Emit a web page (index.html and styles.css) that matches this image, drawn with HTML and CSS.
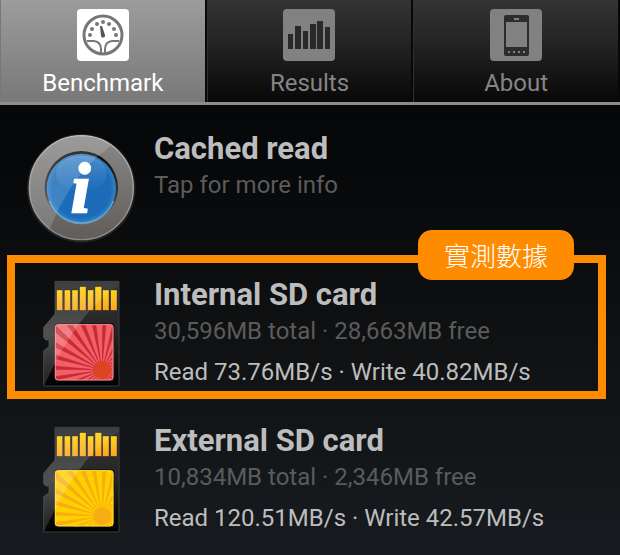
FILE: index.html
```
<!DOCTYPE html>
<html lang="en">
<head>
  <meta charset="UTF-8">
  <meta name="viewport" content="width=device-width, initial-scale=1.0">
  <title>SD card benchmark</title>
  <link rel="stylesheet" href="styles.css">
</head>
<body>
  <!-- shared shapes for the SD card icons -->
  <svg class="defs" aria-hidden="true">
    <defs>
      <linearGradient id="cardBody" x1="0" y1="0" x2="0" y2="1">
        <stop offset="0" stop-color="#363636"/>
        <stop offset="0.5" stop-color="#242424"/>
        <stop offset="1" stop-color="#000"/>
      </linearGradient>
      <linearGradient id="pins" x1="0" y1="0" x2="0" y2="1">
        <stop offset="0" stop-color="#ffd41c"/>
        <stop offset="1" stop-color="#fba524"/>
      </linearGradient>
      <linearGradient id="gloss" x1="0" y1="0" x2="0" y2="1">
        <stop offset="0" stop-color="#fff" stop-opacity="0.04"/>
        <stop offset="0.5" stop-color="#fff" stop-opacity="0.2"/>
        <stop offset="1" stop-color="#fff" stop-opacity="0.12"/>
      </linearGradient>
      <clipPath id="labelClip">
        <rect x="165" y="223" width="175" height="168" rx="9"/>
      </clipPath>
      <symbol id="sdcard" viewBox="120 84 246 333">
        <path d="M165 94H357V408H131V302L147 290V270H137L131 262V232L165 192Z" fill="url(#cardBody)" stroke="#3c3c3c" stroke-width="3"/>
        <g fill="url(#pins)" stroke="#171717" stroke-width="1">
          <rect x="170" y="120" width="18" height="61"/>
          <rect x="193" y="120" width="18" height="61"/>
          <rect x="216" y="120" width="18" height="61"/>
          <rect x="239" y="110" width="19" height="71"/>
          <rect x="263" y="120" width="18" height="61"/>
          <rect x="285" y="110" width="20" height="71"/>
          <rect x="308" y="120" width="19" height="61"/>
          <rect x="332" y="120" width="19" height="61"/>
        </g>
        <rect x="162" y="220" width="181" height="174" rx="11" fill="#151515"/>
        <g clip-path="url(#labelClip)">
          <rect class="label-bg" x="165" y="223" width="175" height="168"/>
          <circle class="label-rays" cx="306" cy="360" r="120" pathLength="56"/>
          <circle class="label-sun" cx="306" cy="360" r="27"/>
        </g>
        <rect class="label-edge" x="166" y="224" width="173" height="166" rx="9"/>
        <path d="M165 94H357V106Q235 180 133 406H131V302L147 290V270H137L131 262V232L165 192Z" fill="url(#gloss)"/>
      </symbol>
    </defs>
  </svg>

  <nav class="tabs">
    <button class="tab active" type="button">
      <svg class="tab-icon" viewBox="0 0 52 52" aria-hidden="true">
        <rect width="52" height="52" rx="4" fill="#fff"/>
        <g fill="none" stroke="#777">
          <circle cx="26" cy="26" r="19" stroke-width="3"/>
          <path d="M10 32H17Q24 33 24 40V44M42 32H35Q28 33 28 40V44" stroke-width="2"/>
        </g>
        <path d="M23 17L25 17L28 26A2 2 0 0 1 24 27Z" fill="#555"/>
        <g fill="#777">
          <circle cx="13" cy="26" r="2"/>
          <circle cx="15" cy="20" r="2"/>
          <circle cx="20" cy="15" r="2"/>
          <circle cx="26" cy="13" r="2"/>
          <circle cx="32" cy="15" r="2"/>
          <circle cx="37" cy="20" r="2"/>
          <circle cx="39" cy="26" r="2"/>
        </g>
      </svg>
      <span>Benchmark</span>
    </button>
    <button class="tab" type="button">
      <svg class="tab-icon" viewBox="0 0 52 52" aria-hidden="true">
        <rect width="52" height="52" rx="4" fill="#818181"/>
        <path d="M5 25h5v15h-5zM12 17h6v23h-6zM20 22h5v18h-5zM27 15h6v25h-6zM34 12h6v28h-6zM42 18h5v22h-5z" fill="#292929"/>
      </svg>
      <span>Results</span>
    </button>
    <button class="tab" type="button">
      <svg class="tab-icon" viewBox="0 0 52 52" aria-hidden="true">
        <rect width="52" height="52" rx="4" fill="#818181"/>
        <rect x="14" y="6" width="25" height="41" rx="2" fill="#2c2c2c"/>
        <rect x="16" y="13" width="21" height="25" fill="#818181"/>
        <path d="M24 10h5M18 43h2M23 43h2M28 43h2M33 43h2" stroke="#818181" stroke-width="2"/>
      </svg>
      <span>About</span>
    </button>
  </nav>

  <main class="list">
    <section class="item">
      <svg class="icon-info" viewBox="15 15 339 345" aria-hidden="true">
        <defs>
          <linearGradient id="ring" x1="0" y1="0" x2="0" y2="1">
            <stop offset="0" stop-color="#8a8886"/>
            <stop offset="1" stop-color="#605d5b"/>
          </linearGradient>
          <linearGradient id="rim" x1="0" y1="0" x2="0" y2="1">
            <stop offset="0" stop-color="#c0c0c0"/>
            <stop offset="1" stop-color="#8a8a8a"/>
          </linearGradient>
          <linearGradient id="well" x1="0" y1="0" x2="0" y2="1">
            <stop offset="0" stop-color="#0b0b0b"/>
            <stop offset="0.6" stop-color="#333"/>
            <stop offset="1" stop-color="#93918f"/>
          </linearGradient>
          <radialGradient id="blue" cx="0.5" cy="0.5" r="0.5">
            <stop offset="0" stop-color="#1b6bb9"/>
            <stop offset="0.85" stop-color="#1c6cba"/>
            <stop offset="1" stop-color="#3582c4"/>
          </radialGradient>
          <linearGradient id="shine" x1="0" y1="0" x2="0" y2="1">
            <stop offset="0" stop-color="#fff" stop-opacity="0.2"/>
            <stop offset="1" stop-color="#fff" stop-opacity="0"/>
          </linearGradient>
          <clipPath id="disc"><circle cx="184" cy="188" r="155"/></clipPath>
        </defs>
        <circle cx="184" cy="190" r="163" fill="#222"/>
        <circle cx="184" cy="188" r="156" fill="url(#ring)" stroke="url(#rim)" stroke-width="4"/>
        <circle cx="184" cy="188" r="110" fill="url(#well)"/>
        <circle cx="184" cy="190" r="104" fill="url(#blue)"/>
        <path d="M88 228A103 103 0 0 0 280 228" fill="none" stroke="#59aadd" stroke-width="4"/>
        <ellipse cx="184" cy="146" rx="76" ry="54" fill="url(#shine)"/>
        <path d="M20 20H325L268 67Q155 145 88 315L60 350H20Z" fill="#fff" fill-opacity="0.16" clip-path="url(#disc)"/>
        <text class="info-letter" x="182" y="260" text-anchor="middle">i</text>
      </svg>
      <div class="text">
        <h2>Cached read</h2>
        <p class="detail">Tap for more info</p>
      </div>
    </section>

    <section class="item highlight">
      <svg class="icon-card red" aria-hidden="true"><use href="#sdcard"/></svg>
      <div class="text">
        <h2>Internal SD card</h2>
        <p class="detail">30,596MB total · 28,663MB free</p>
        <p class="result">Read 73.76MB/s · Write 40.82MB/s</p>
      </div>
      <span class="callout" lang="zh-Hant">實測數據</span>
    </section>

    <section class="item">
      <svg class="icon-card yellow" aria-hidden="true"><use href="#sdcard"/></svg>
      <div class="text">
        <h2>External SD card</h2>
        <p class="detail">10,834MB total · 2,346MB free</p>
        <p class="result">Read 120.51MB/s · Write 42.57MB/s</p>
      </div>
    </section>
  </main>
</body>
</html>
```
FILE: styles.css
```
* {
  box-sizing: border-box;
}
body {
  margin: 0;
  min-height: 100vh;
  font-family: Roboto, "Noto Sans CJK TC", sans-serif;
  font-size: 24px;
  color: #bdbdbd;
  background: linear-gradient(#030406, #07080a 30%, #101214 65%, #171b1f);
}
.defs {
  position: absolute;
  width: 0;
  height: 0;
}

/* tabs */
.tabs {
  display: grid;
  grid-template-columns: repeat(3, 1fr);
  border-bottom: 3px solid #8c8c8c;
}
.tab {
  display: flex;
  flex-direction: column;
  align-items: center;
  gap: 8px;
  padding: 9px 0 5px;
  border: 0;
  border-left: 1px solid #303030;
  border-right: 2px solid #080808;
  background: linear-gradient(#343434, #222 45%, #080808);
  color: #858585;
  font-family: inherit;
  font-size: 24px;
  line-height: 28px;
  cursor: pointer;
}
.tab.active {
  border-left-color: #777;
  background: linear-gradient(#9c9c9c, #787878);
  color: #fff;
}
.tab-icon {
  width: 52px;
  height: 52px;
}

/* list */
.list {
  padding-top: 4px;
}
.item {
  display: grid;
  grid-template-columns: 154px 1fr;
  position: relative;
  height: 146px;
  padding-top: 22px;
}
.text h2 {
  margin: 0;
  font-size: 31px;
  font-weight: 700;
  line-height: 36px;
}
.text p {
  margin: 0;
  line-height: 36px;
}
.text .detail {
  color: #5b5b5b;
}
.text .result {
  margin-top: 5px;
}
.icon-info {
  width: 113px;
  height: 115px;
  margin: -1px 0 0 25px;
}
.info-letter {
  font-family: "Liberation Serif", serif;
  font-size: 208px;
  font-weight: 700;
  font-style: italic;
  fill: #fff;
  stroke: #fff;
  stroke-width: 7px;
}
.icon-card {
  width: 82px;
  height: 111px;
  margin: 1px 0 0 40px;
}
.red {
  --bg: #f0606a;
  --ray: #cb2b30;
  --sun: #dc4423;
  --edge: #f58a8e;
}
.yellow {
  --bg: #ffd000;
  --ray: #f8ad12;
  --sun: #f8ad12;
  --edge: #ffdf30;
}
.label-bg {
  fill: var(--bg);
}
.label-rays {
  fill: none;
  stroke: var(--ray);
  stroke-width: 240;
  stroke-dasharray: 0.8 1.2;
}
.label-sun {
  fill: var(--sun);
}
.label-edge {
  fill: none;
  stroke: var(--edge);
  stroke-width: 3;
}

/* orange frame round the measured row */
.highlight::after {
  content: "";
  position: absolute;
  inset: 0 14px 2px 7px;
  border: 8px solid #ff8c00;
  pointer-events: none;
}
.callout {
  position: absolute;
  top: -25px;
  right: 46px;
  z-index: 1;
  padding: 0 26px;
  border-radius: 14px;
  background: #ff8c00;
  color: #fff;
  font-family: "Noto Sans CJK TC", sans-serif;
  font-size: 26px;
  font-weight: 300;
  line-height: 50px;
}
```
